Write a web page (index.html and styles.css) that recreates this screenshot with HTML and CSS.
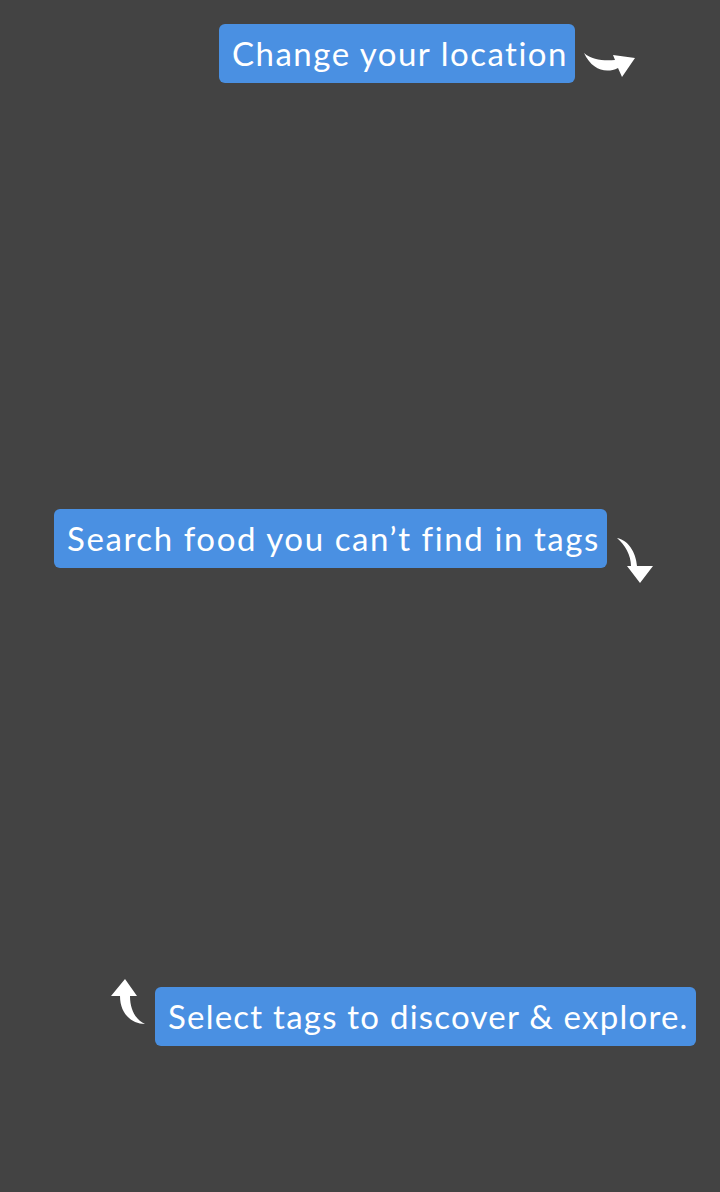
FILE: index.html
```html
<!DOCTYPE html>
<html>
<head>
<meta charset="utf-8">
<link rel="stylesheet" href="styles.css">
</head>
<body>
<div class="overlay">
  <div class="row row-location">
    <div class="tip tip-location">Change your location</div>
    <svg class="arrow arrow-right" width="52" height="27" viewBox="0 0 52 27">
      <path d="M0,1 C8,8 20,9 31,8 L29,3 L51,6 L38,25 L34,16 C22,22 8,18 0,1 Z" fill="#fff"/>
    </svg>
  </div>
  <div class="row row-search">
    <div class="tip tip-search">Search food you can’t find in tags</div>
    <svg class="arrow arrow-down" width="38" height="48" viewBox="0 0 38 48">
      <path d="M1,1 C12,3 20,15 21,29 L37,29 L24,46 L11,29 L15,29 C15,18 9,8 1,1 Z" fill="#fff"/>
    </svg>
  </div>
  <div class="row row-tags">
    <svg class="arrow arrow-up" width="37" height="48" viewBox="0 0 37 48">
      <path d="M15,1 L27,18 L20,18 C20,32 26,42 35,46 C22,46 10,36 10,18 L1,18 Z" fill="#fff"/>
    </svg>
    <div class="tip tip-tags">Select tags to discover &amp; explore.</div>
  </div>
</div>
</body>
</html>
```
FILE: styles.css
```css
html, body {
  margin: 0;
  padding: 0;
  background: #434343;
}
.overlay {
  width: 720px;
  height: 1192px;
  display: flex;
  flex-direction: column;
  font-family: Lato, "Liberation Sans", sans-serif;
}
.row {
  display: flex;
  align-items: flex-start;
}
.tip {
  background: #4a90e2;
  color: #fff;
  border-radius: 6px;
  height: 59px;
  line-height: 59px;
  font-size: 33px;
  padding: 0 7px 0 13px;
  box-sizing: border-box;
  white-space: nowrap;
}
.tip-location { letter-spacing: 1.5px; }
.tip-search { letter-spacing: 1.59px; }
.tip-tags { letter-spacing: 1.23px; }
.row-location {
  margin-top: 24px;
  padding-left: 219px;
}
.row-location .arrow { margin-left: 9px; margin-top: 28px; }
.row-search {
  margin-top: 426px;
  padding-left: 54px;
}
.row-search .arrow { margin-left: 9px; margin-top: 28px; }
.row-tags {
  margin-top: 402px;
  padding-left: 110px;
}
.row-tags .arrow { margin-right: 8px; margin-top: -9px; }
```
